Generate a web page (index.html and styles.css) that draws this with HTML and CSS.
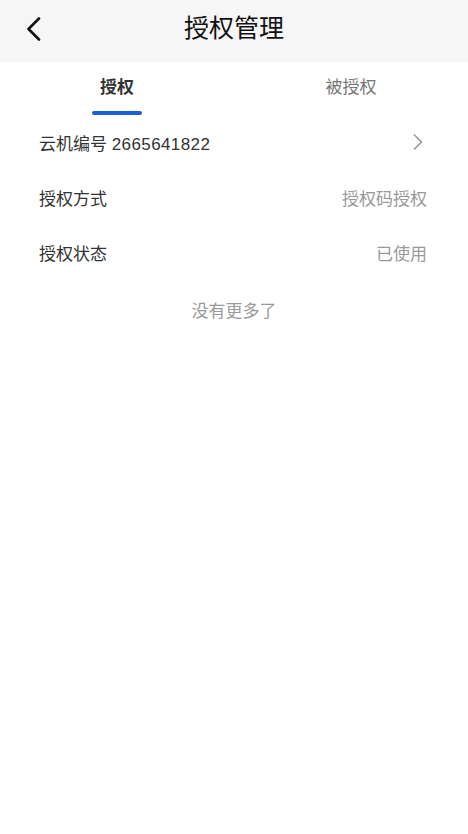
FILE: index.html
```html
<!DOCTYPE html>
<html lang="zh-CN">
<head>
<meta charset="utf-8">
<title>授权管理</title>
<link rel="stylesheet" href="styles.css">
</head>
<body>
<header class="nav">
  <button class="back" aria-label="返回">
    <svg width="16" height="24" viewBox="0 0 16 24"><path d="M13 1.5 L2.5 12 L13 22.5" fill="none" stroke="#111" stroke-width="2.6" stroke-linecap="round" stroke-linejoin="round"/></svg>
  </button>
  <h1 class="title">授权管理</h1>
</header>
<nav class="tabs">
  <div class="tab active"><span class="tab-text">授权</span><span class="bar"></span></div>
  <div class="tab"><span class="tab-text">被授权</span><span class="bar"></span></div>
</nav>
<section class="list">
  <div class="row">
    <span class="label">云机编号 <span class="num">2665641822</span></span>
    <svg class="arrow" width="10" height="16" viewBox="0 0 10 16"><path d="M1.5 1 L8.5 8 L1.5 15" fill="none" stroke="#999" stroke-width="1.7" stroke-linecap="round" stroke-linejoin="round"/></svg>
  </div>
  <div class="row">
    <span class="label">授权方式</span>
    <span class="value">授权码授权</span>
  </div>
  <div class="row">
    <span class="label">授权状态</span>
    <span class="value">已使用</span>
  </div>
</section>
<p class="end">没有更多了</p>
</body>
</html>
```

FILE: styles.css
```css
* { box-sizing: border-box; }
html, body { margin: 0; padding: 0; background: #fff; }
body {
  font-family: "Liberation Sans", "Noto Sans CJK SC", sans-serif;
  color: #333;
  width: 468px;
  min-height: 834px;
}
.nav {
  height: 62px;
  background: #f6f6f6;
  display: flex;
  align-items: center;
  justify-content: center;
  position: relative;
}
.back {
  position: absolute;
  left: 26px;
  top: 17px;
  width: 18px;
  height: 24px;
  padding: 0;
  border: 0;
  background: none;
  display: flex;
}
.title {
  margin: 0 0 6px;
  font-size: 25px;
  font-weight: 400;
  color: #111;
  line-height: 32px;
}
.tabs {
  display: flex;
  height: 54px;
}
.tab {
  flex: 1;
  display: flex;
  flex-direction: column;
  align-items: center;
  padding-top: 14px;
}
.tab-text {
  font-size: 17px;
  line-height: 24px;
  color: #777;
}
.bar {
  margin-top: 11px;
  width: 50px;
  height: 4px;
  border-radius: 2px;
  background: transparent;
}
.tab.active .tab-text { color: #333; font-weight: 700; }
.tab.active .bar { background: #1a5fd9; }
.list { display: flex; flex-direction: column; }
.row {
  height: 55px;
  padding: 0 41px 3px 39px;
  display: flex;
  align-items: center;
  justify-content: space-between;
  font-size: 17px;
}
.label { color: #333; }
.num { letter-spacing: 0.4px; }
.value { color: #999; }
.arrow { margin-right: 4px; }
.end {
  margin: 19px 0 0;
  text-align: center;
  font-size: 17px;
  line-height: 24px;
  color: #999;
}
```
